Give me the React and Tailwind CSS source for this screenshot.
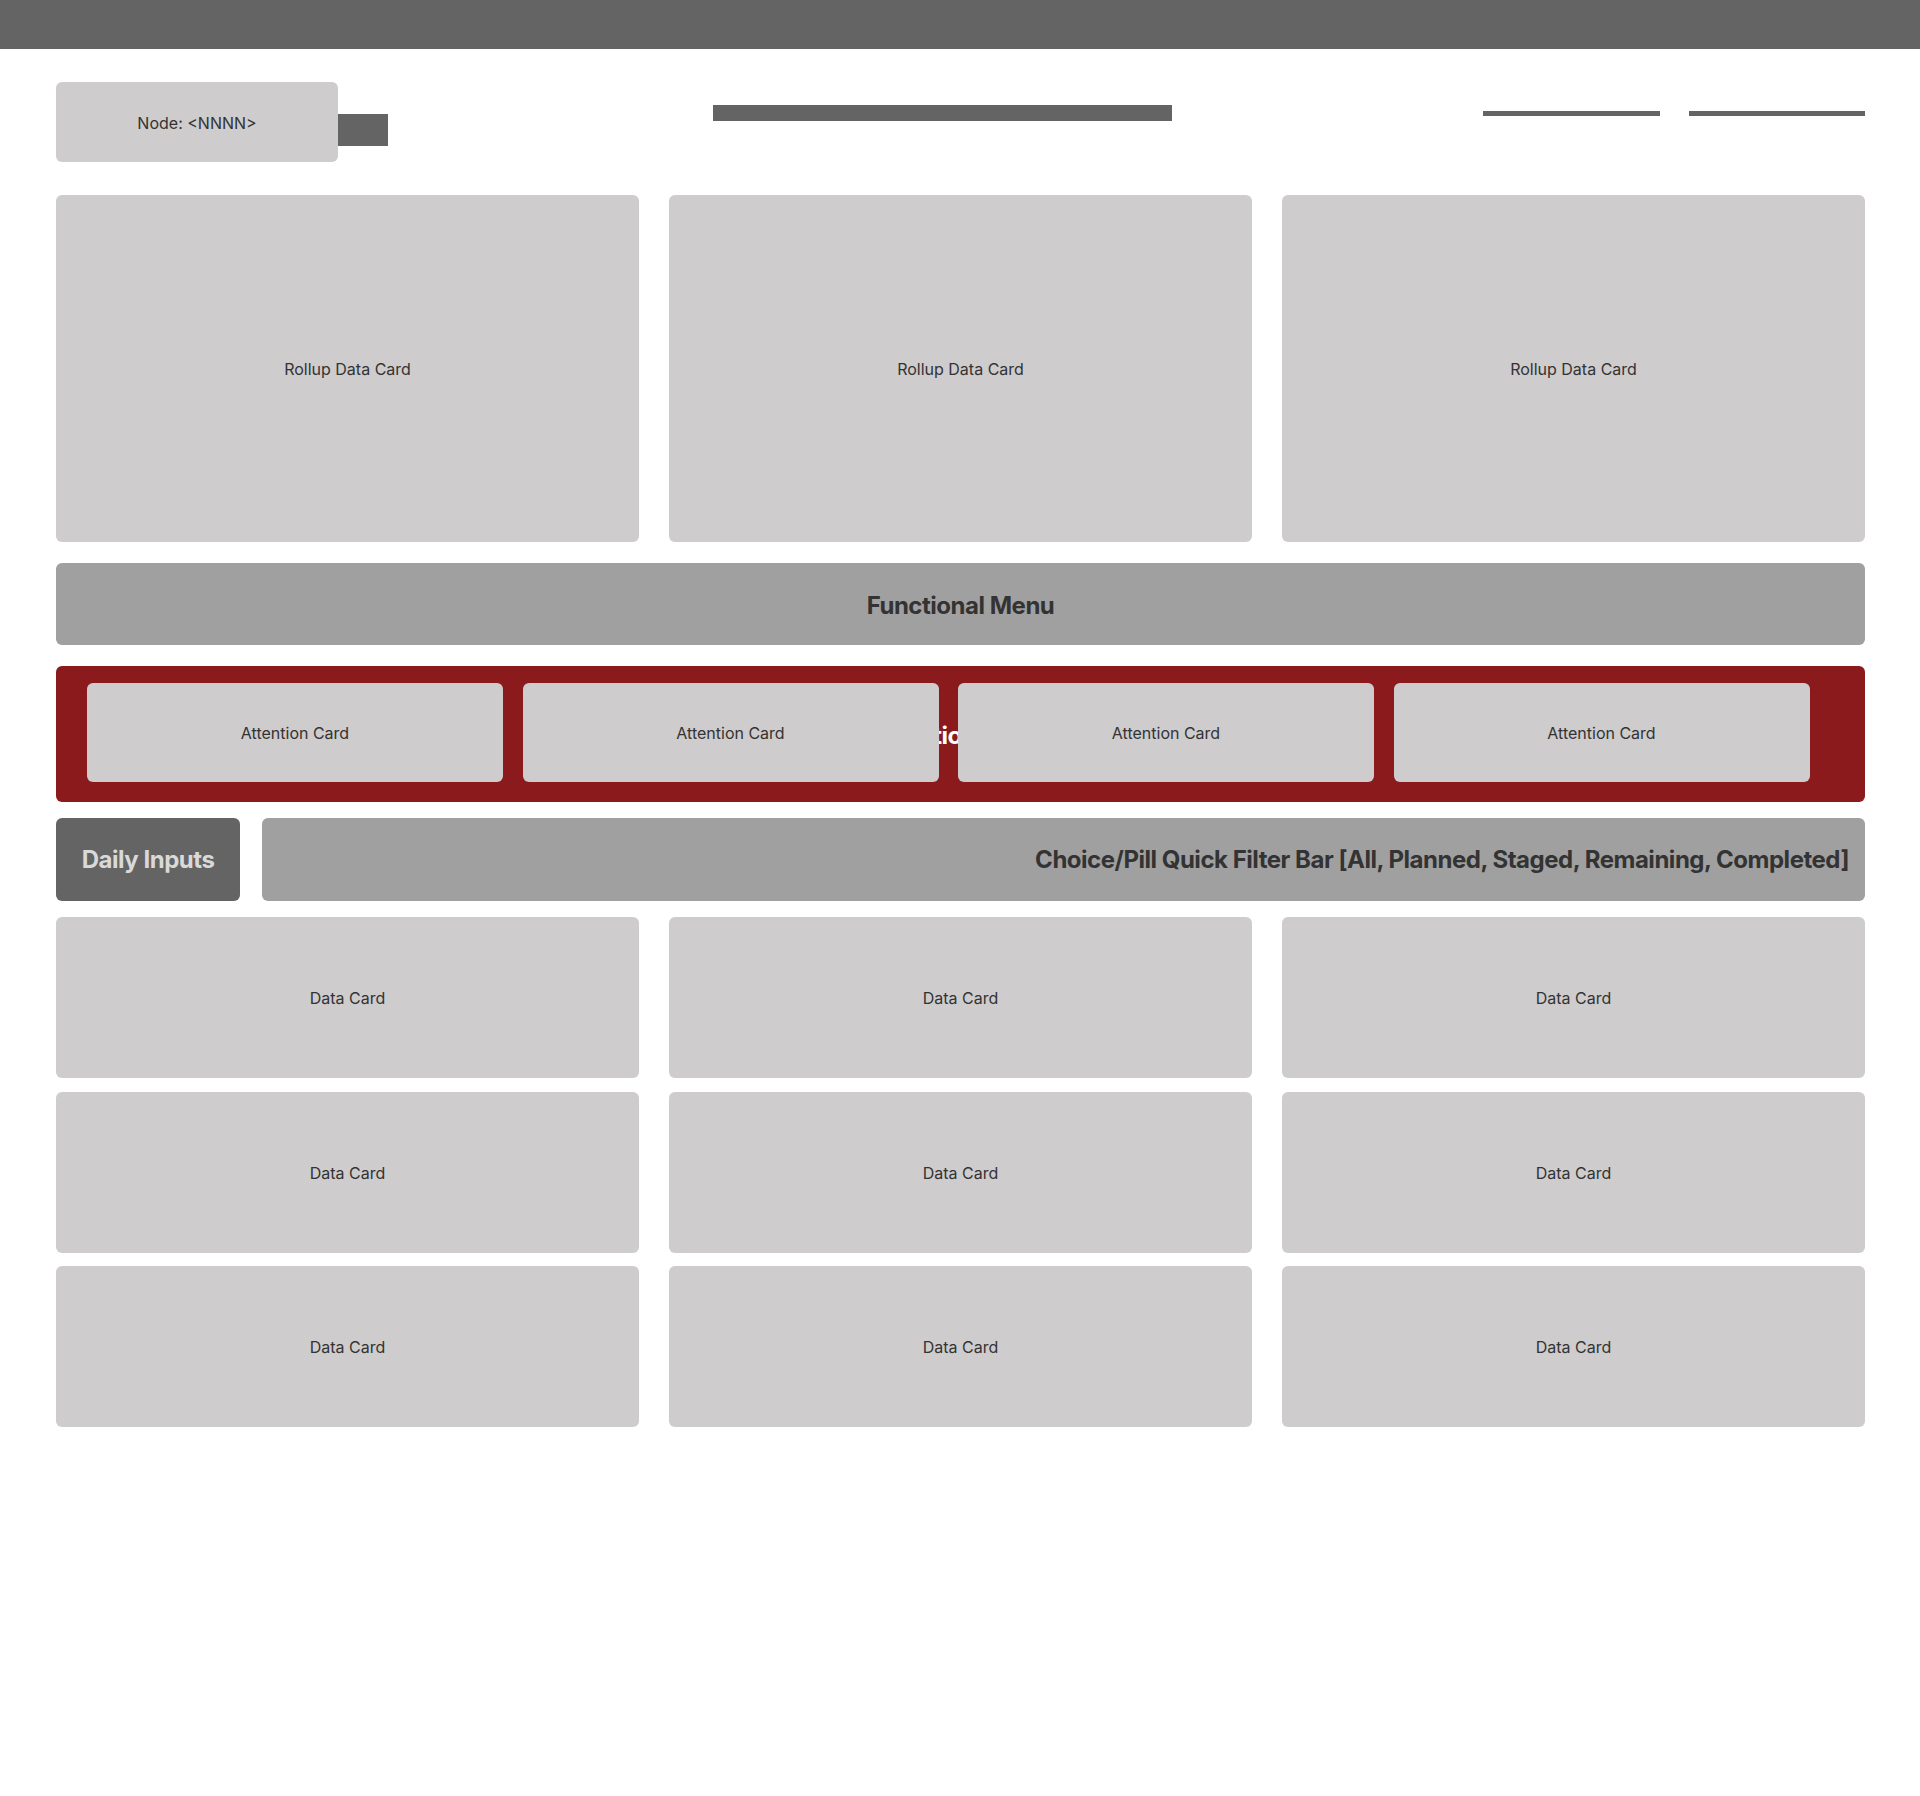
import React from 'react'

const font = { fontFamily: 'Inter, "Noto Sans", sans-serif' }

function Card({ label, className = '' }) {
  return (
    <div className={`flex items-center justify-center rounded-md bg-[#cecccd] pt-[1px] text-base text-[#333333] ${className}`}>
      {label}
    </div>
  )
}

export default function App() {
  const rollups = ['Rollup Data Card', 'Rollup Data Card', 'Rollup Data Card']
  const attention = ['Attention Card', 'Attention Card', 'Attention Card', 'Attention Card']
  const dataCards = Array.from({ length: 9 }, () => 'Data Card')

  return (
    <div className="min-h-[1796px] w-full bg-white" style={font}>
      <div className="h-[49px] w-full bg-[#646464]" />

      <div className="pl-[56px] pr-[55px]">
        {/* top toolbar */}
        <div className="mt-[33px] flex h-[80px] items-start">
          <div className="flex h-[80px] w-[282px] items-center justify-center rounded-md bg-[#cecccd] pt-[1px] text-base text-[#333333]">
            Node: &lt;NNNN&gt;
          </div>
          <div className="mt-[32px] h-[32px] w-[50px] bg-[#646464]" />
          <div className="ml-[325px] mt-[23px] h-[16px] w-[459px] bg-[#646464]" />
          <div className="ml-auto mt-[29px] flex gap-[29px]">
            <div className="h-[5px] w-[177px] bg-[#646464]" />
            <div className="h-[5px] w-[176px] bg-[#646464]" />
          </div>
        </div>

        {/* rollups */}
        <div className="mt-[33px] grid grid-cols-3 gap-x-[30px]">
          {rollups.map((r, i) => (
            <Card key={i} label={r} className="h-[347px]" />
          ))}
        </div>

        <div className="mt-[21px] flex h-[82px] items-center justify-center rounded-md bg-[#a0a0a0] pt-[3px] text-2xl font-bold tracking-[-0.02em] text-[#333333]">
          Functional Menu
        </div>

        {/* attention band */}
        <div className="relative mt-[21px] h-[136px] rounded-md bg-[#8a1a1c] pl-[31px] pt-[17px]">
          <div className="absolute inset-0 flex items-center justify-center pt-[4px] text-2xl font-bold tracking-[-0.02em] text-white">
            Attention Cards
          </div>
          <div className="relative z-10 flex gap-[19.5px]">
            {attention.map((a, i) => (
              <Card key={i} label={a} className="h-[99px] w-[416px]" />
            ))}
          </div>
        </div>

        {/* daily inputs + filter */}
        <div className="mt-[16px] flex h-[83px] gap-[22px]">
          <div className="flex w-[184px] items-center justify-center rounded-md bg-[#646464] pt-[1px] text-2xl font-bold tracking-[-0.02em] text-[#d9d9d9]">
            Daily Inputs
          </div>
          <div className="flex flex-1 items-center justify-end rounded-md bg-[#a0a0a0] pr-4 pt-[1px] text-2xl font-bold tracking-[-0.02em] text-[#333333]">
            Choice/Pill Quick Filter Bar [All, Planned, Staged, Remaining, Completed]
          </div>
        </div>

        {/* data cards */}
        <div className="mt-[16px] grid grid-cols-3 gap-x-[30px] gap-y-[13.5px]">
          {dataCards.map((d, i) => (
            <Card key={i} label={d} className="h-[161px]" />
          ))}
        </div>
      </div>
    </div>
  )
}
